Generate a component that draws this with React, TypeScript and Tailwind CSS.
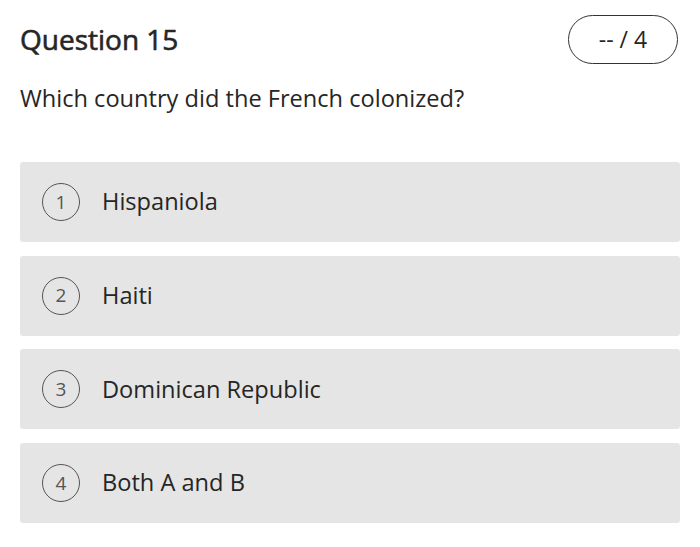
import React from "react";

const options = ["Hispaniola", "Haiti", "Dominican Republic", "Both A and B"];

export default function App() {
  return (
    <div
      className="w-[700px] h-[547px] bg-white text-[#262626] px-5 pt-[15px]"
      style={{ fontFamily: '"Open Sans", sans-serif' }}
    >
      <div className="flex items-center justify-between h-[49px]">
        <h1 className="text-[28px] font-normal leading-none -mt-[1px] [-webkit-text-stroke:0.6px_#262626]">Question 15</h1>
        <div className="w-[110px] h-[49px] rounded-full border-[1.5px] border-[#333] flex items-center justify-center text-[23px] mr-[2px]">
          -- / 4
        </div>
      </div>
      <p className="mt-[19px] text-[23.6px] leading-[30px]">Which country did the French colonized?</p>
      <div className="mt-[49px] flex flex-col gap-[13.67px]">
        {options.map((o, i) => (
          <div
            key={o}
            className="h-[80px] bg-[#e5e5e5] rounded-[3px] flex items-center pl-[22px]"
          >
            <div className="w-[38px] h-[38px] rounded-full border-[1.5px] border-[#555] flex items-center justify-center text-[19px] text-[#555]">
              {i + 1}
            </div>
            <span className="ml-[22px] text-[23.6px]">{o}</span>
          </div>
        ))}
      </div>
    </div>
  );
}
